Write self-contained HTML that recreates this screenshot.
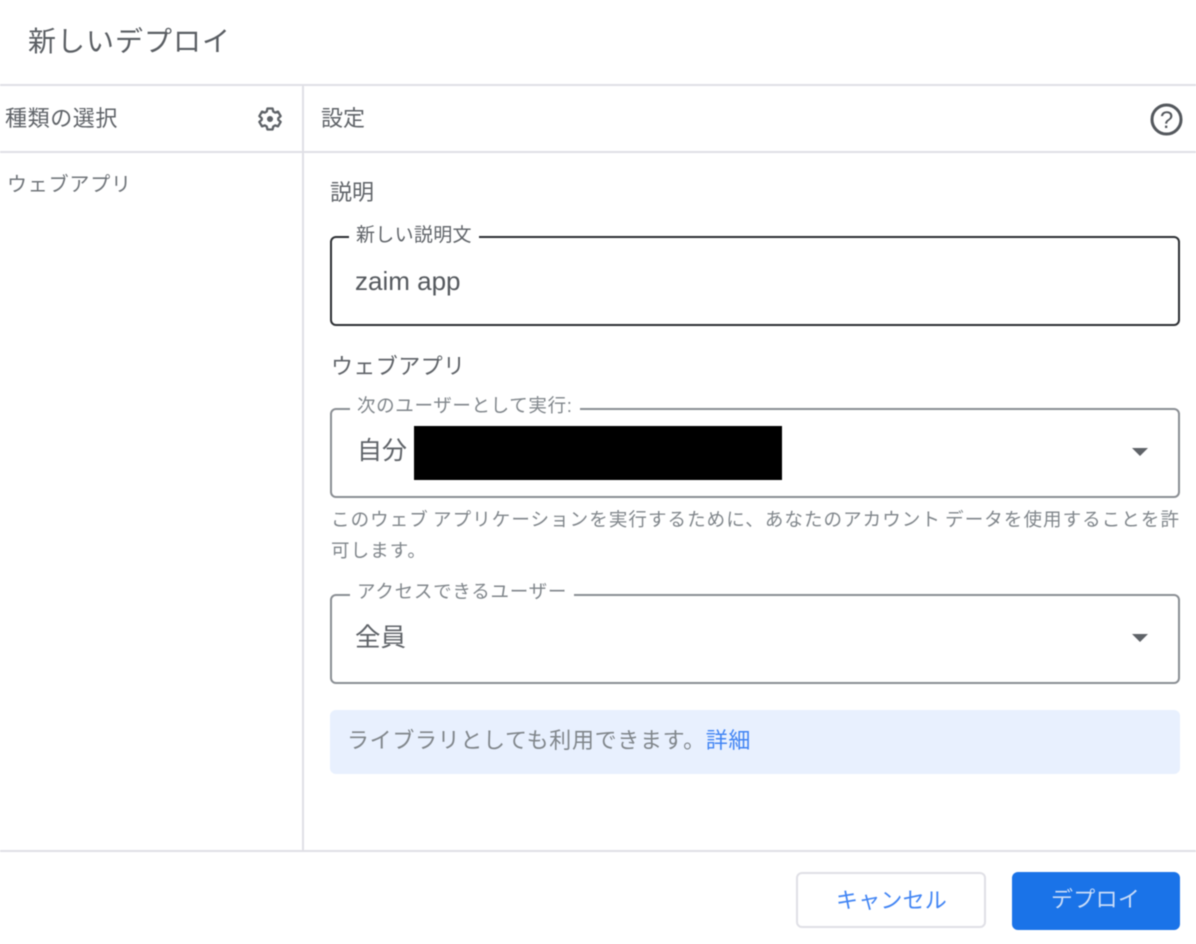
<!DOCTYPE html>
<html lang="ja">
<head>
<meta charset="utf-8">
<title>新しいデプロイ</title>
<style>
html,body{margin:0;padding:0;background:#fff}
#p{position:relative;width:1196px;height:944px;overflow:hidden;background:#fff;font-family:"Liberation Sans","Noto Sans CJK JP",sans-serif;color:#5f6368;filter:blur(.5px)}
.t{position:absolute;white-space:nowrap;line-height:1;font-weight:400}
.l{position:absolute;background:#e0e0e6}
.box{position:absolute;box-sizing:border-box;border-radius:6px}
.lab{position:absolute;background:#fff;white-space:nowrap;line-height:1;padding:0 7px;font-size:18px}
svg{position:absolute}
</style>
</head>
<body>
<div id="p">
<div class="t" style="left:28px;top:28px;font-size:28px;letter-spacing:1px;color:#5a5e63">新しいデプロイ</div>
<div class="l" style="left:0;top:84px;width:1196px;height:2px"></div>
<div class="l" style="left:0;top:151px;width:1196px;height:2px"></div>
<div class="l" style="left:302px;top:85px;width:2px;height:766px"></div>
<div class="l" style="left:0;top:850px;width:1196px;height:2px"></div>

<div class="t" style="left:5px;top:108px;font-size:22px;letter-spacing:.6px">種類の選択</div>
<svg style="left:256px;top:105px" width="28" height="28" viewBox="0 0 24 24"><path fill="none" stroke="#5f6368" stroke-width="2" stroke-linejoin="round" d="M9.800 3h4.400l.6 2.600 1.600.9 2.500-.8 2.200 3.800-2 1.800v1.400l2 1.800-2.200 3.800-2.500-.8-1.600.9-.6 2.600H9.800l-.6-2.600-1.600-.9-2.500.8-2.200-3.800 2-1.800v-1.400l-2-1.800 2.200-3.800 2.500.8 1.600-.9z"/><circle cx="12" cy="12" r="2.600" fill="#5f6368"/></svg>
<div class="t" style="left:321px;top:108px;font-size:22px">設定</div>
<svg style="left:1149px;top:102px" width="35" height="35" viewBox="0 0 35 35"><circle cx="17.500" cy="17.500" r="14.500" fill="none" stroke="#54585d" stroke-width="3"/><text x="17.500" y="26" text-anchor="middle" font-size="24" font-family="Liberation Sans,sans-serif" fill="#54585d">?</text></svg>

<div class="t" style="left:7px;top:175px;font-size:20px;letter-spacing:.8px;color:#70757a">ウェブアプリ</div>
<div class="t" style="left:330px;top:182px;font-size:22px">説明</div>

<div class="box" style="left:330px;top:236px;width:850px;height:90px;border:2px solid #2c2f33"></div>
<div class="lab" style="left:349px;top:226px;font-size:19px;letter-spacing:.3px">新しい説明文</div>
<div class="t" style="left:355px;top:268px;font-size:26px;color:#55595e">zaim app</div>

<div class="t" style="left:331px;top:356px;font-size:22px;letter-spacing:.4px">ウェブアプリ</div>

<div class="box" style="left:330px;top:408px;width:850px;height:90px;border:2px solid #8a8e93"></div>
<div class="lab" style="left:350px;top:397px;color:#80868b;font-size:18.500px;letter-spacing:.65px">次のユーザーとして実行:</div>
<div class="t" style="left:357px;top:439px;font-size:25px">自分</div>
<div style="position:absolute;left:414px;top:426px;width:368px;height:54px;background:#000"></div>
<svg style="left:1131px;top:447px" width="18" height="10" viewBox="0 0 18 10"><path d="M1 1h16L9 9z" fill="#5f6368"/></svg>

<div class="t" style="left:331px;top:511px;font-size:18.500px;letter-spacing:1.07px;color:#80868b;word-spacing:-2px">このウェブ アプリケーションを実行するために、あなたのアカウント データを使用することを許</div>
<div class="t" style="left:331px;top:542px;font-size:18.500px;letter-spacing:1.07px;color:#80868b">可します。</div>

<div class="box" style="left:330px;top:594px;width:850px;height:90px;border:2px solid #8a8e93"></div>
<div class="lab" style="left:350px;top:583px;color:#80868b;font-size:18.500px;letter-spacing:.75px">アクセスできるユーザー</div>
<div class="t" style="left:355px;top:626px;font-size:25.500px">全員</div>
<svg style="left:1131px;top:633px" width="18" height="10" viewBox="0 0 18 10"><path d="M1 1h16L9 9z" fill="#5f6368"/></svg>

<div class="box" style="left:330px;top:710px;width:850px;height:64px;background:#e8f0fe"></div>
<div class="t" style="left:347px;top:730px;font-size:22px;letter-spacing:.67px;color:#80868b">ライブラリとしても利用できます。<span style="color:#4285f4">詳細</span></div>

<div class="box" style="left:796px;top:872px;width:190px;height:56px;border:2px solid #e0e0e6;background:#fff"></div>
<div class="t" style="left:836px;top:890px;font-size:22px;letter-spacing:.2px;color:#4285f4">キャンセル</div>
<div class="box" style="left:1012px;top:872px;width:168px;height:58px;background:#1a73e8"></div>
<div class="t" style="left:1051px;top:889px;font-size:22px;letter-spacing:.3px;color:#c9dcf8">デプロイ</div>
</div>
</body>
</html>
